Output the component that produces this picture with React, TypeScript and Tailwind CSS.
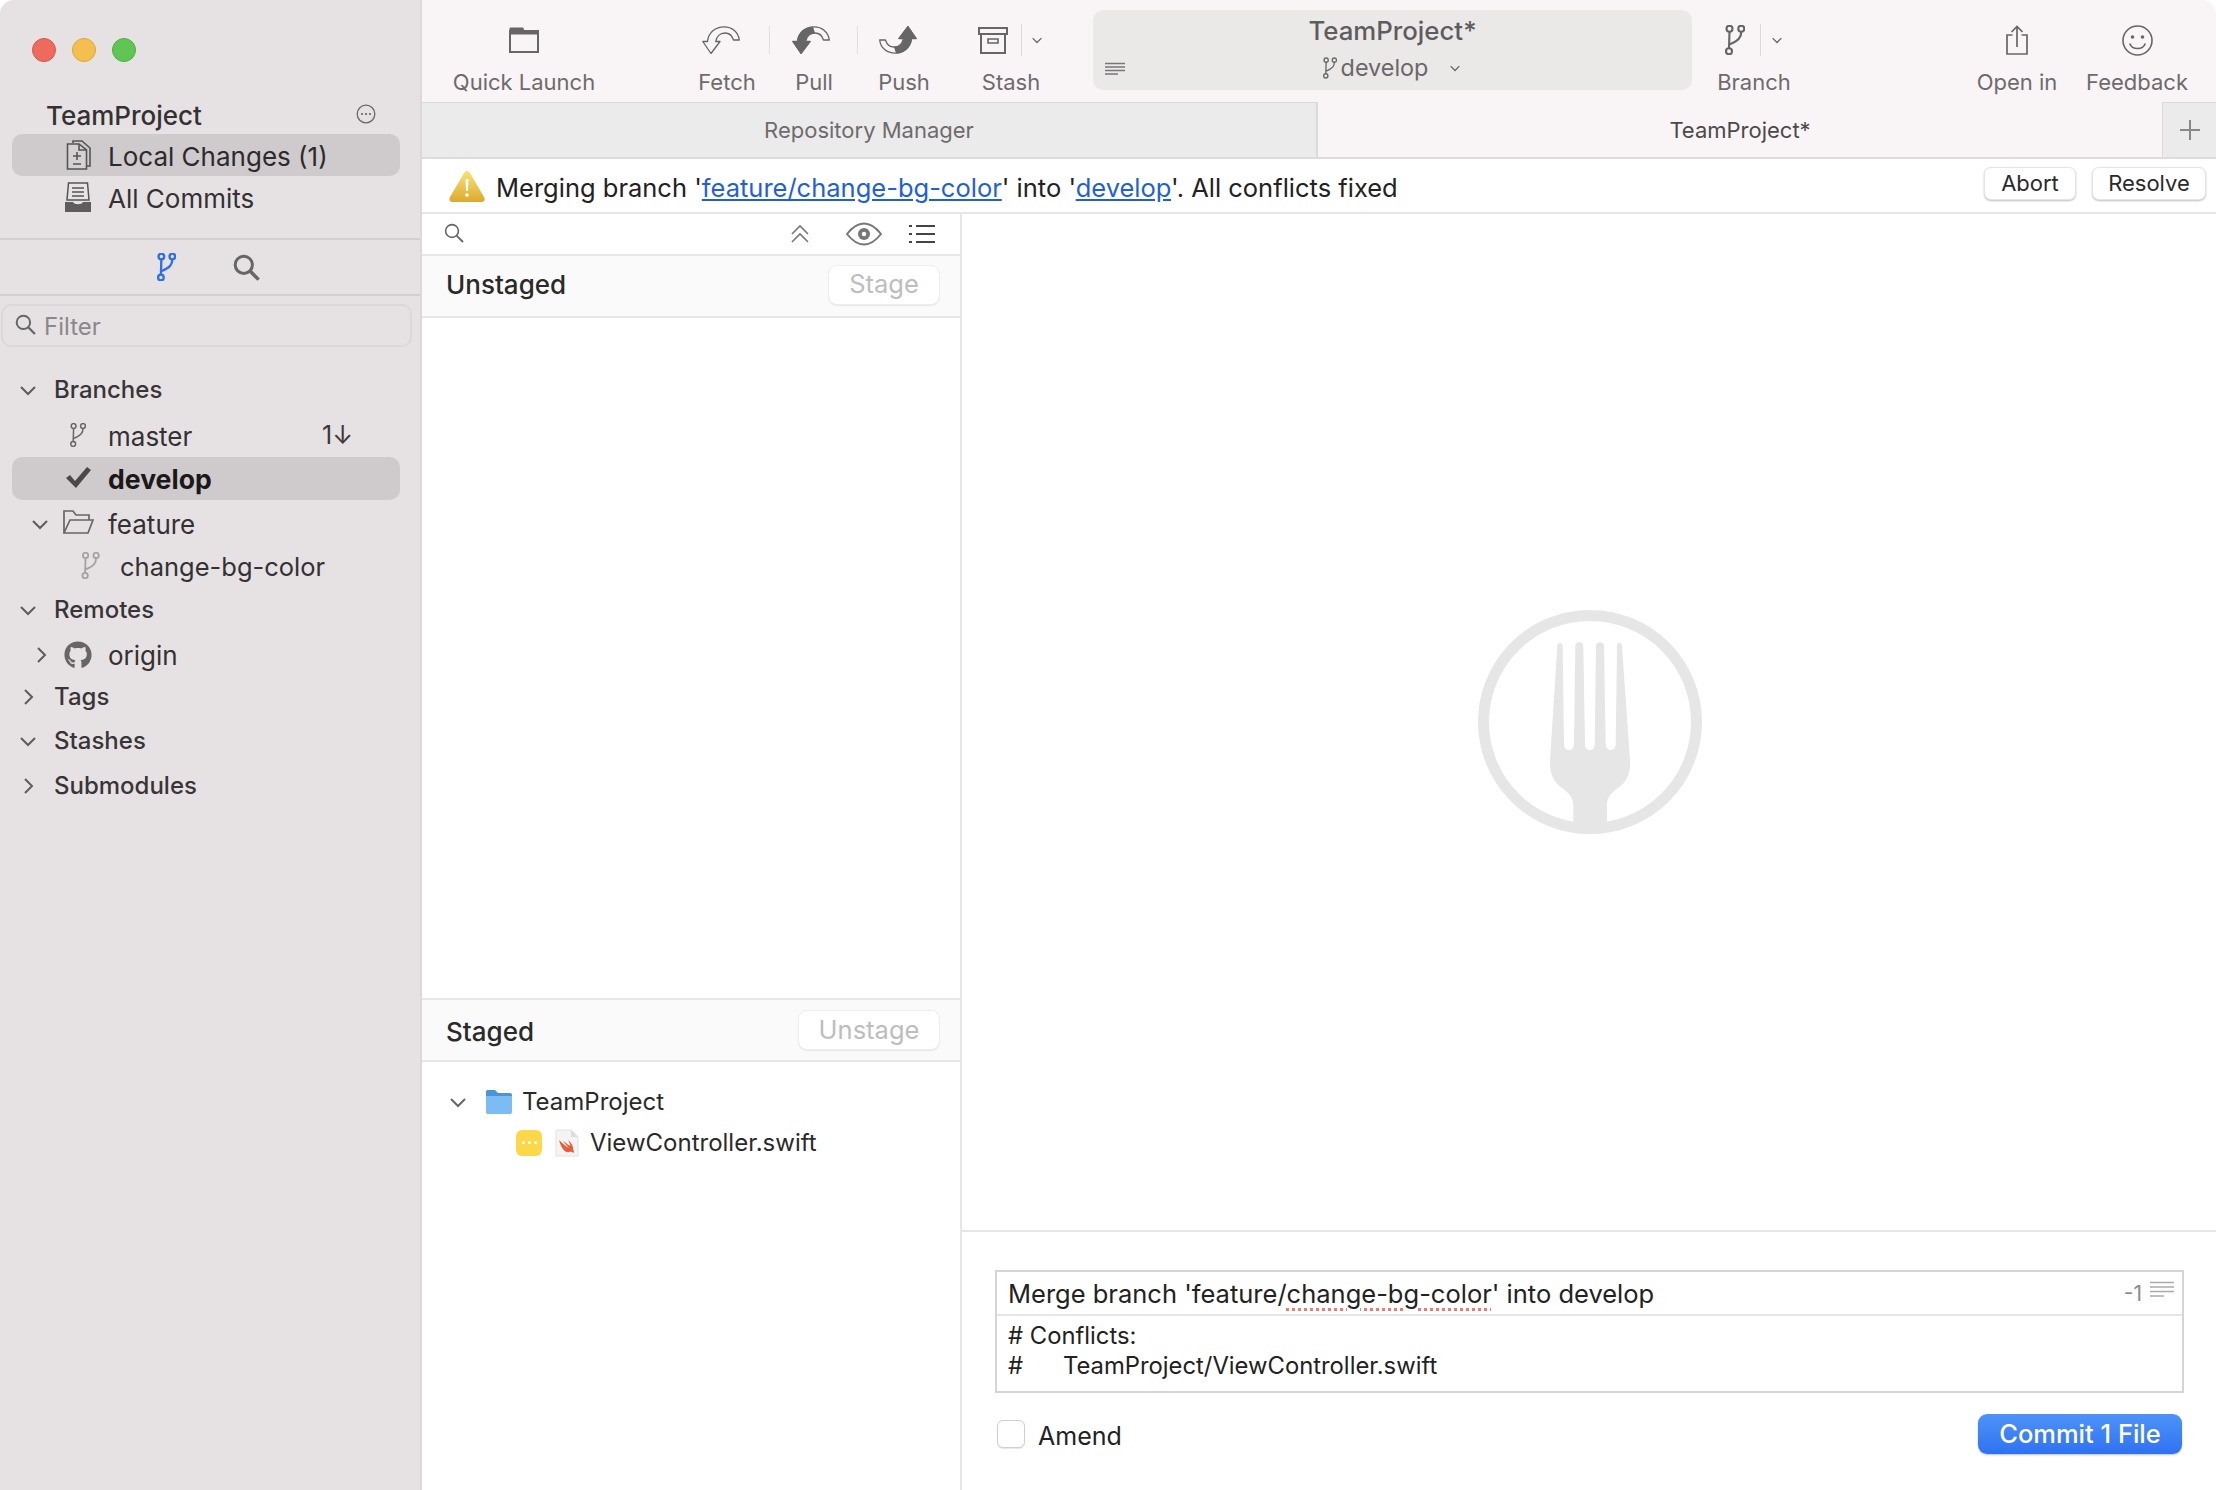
import React from "react";
import { FaGithub } from "react-icons/fa";

const FONT = "font-['Inter','Noto_Sans',sans-serif]";

function Branch({ s = "#555", w = 16, h = 24, sw = 1.6, className = "" }: { s?: string; w?: number; h?: number; sw?: number; className?: string }) {
  return (
    <svg width={w} height={h} viewBox="0 0 16 24" fill="none" stroke={s} strokeWidth={sw} className={className}>
      <circle cx="3.6" cy="3" r="2.4" />
      <circle cx="13" cy="3" r="2.4" />
      <circle cx="3.2" cy="21" r="2.4" />
      <path d="M3.6 5.4 L3.2 18.6 M13 5.4 C13 10 11 12.5 3.6 15.5" />
    </svg>
  );
}

function Search({ s = "#666", size = 18, sw = 1.8, className = "" }: { s?: string; size?: number; sw?: number; className?: string }) {
  return (
    <svg width={size} height={size} viewBox="0 0 20 20" fill="none" stroke={s} strokeWidth={sw} className={className}>
      <circle cx="8" cy="8" r="6.4" />
      <path d="M12.6 12.6 L19 19" strokeWidth={sw * 1.15} />
    </svg>
  );
}

function Chev({ dir = "down", s = "#5f5c5d", size = 16, sw = 2, className = "" }: { dir?: "down" | "right"; s?: string; size?: number; sw?: number; className?: string }) {
  return (
    <svg width={size} height={size} viewBox="0 0 16 16" fill="none" stroke={s} strokeWidth={sw} className={className}>
      {dir === "down" ? <path d="M1 5 L8 12 L15 5" /> : <path d="M5 1 L12 8 L5 15" />}
    </svg>
  );
}

function ArrowCurve({ mode }: { mode: "fetch" | "pull" | "push" }) {
  const outline =
    "M9 27.5 L0.8 15.5 H5.5 C6.5 6 14 0.8 22 0.8 C30 0.8 36.5 6 37.3 14 H31.5 C30 9 27 7 23 7 C18 7 14.5 10.5 13.7 15.5 H18 Z";
  const fill = "M9 28 L0 15 H5 C6 6 13 1 21 0.8 L23 7 C18 7 14.5 10.5 13.7 15 H19 Z";
  return (
    <svg width="38" height="28" viewBox="0 0 38 28" fill="none" stroke="#666" strokeWidth="1.3" strokeLinejoin="round">
      <g transform={mode === "push" ? "rotate(180 19 14)" : undefined}>
        <path d={outline} />
        {mode !== "fetch" && <path d={fill} fill="#666" stroke="none" />}
      </g>
    </svg>
  );
}

function ToolCol({ w, ml, label, children }: { w: string; ml: string; label: string; children: React.ReactNode }) {
  return (
    <div className={`${w} ${ml} h-[102px] shrink-0 flex flex-col items-center`}>
      <div className="mt-[22px] h-[36px] flex items-center justify-center">{children}</div>
      <div className="mt-[10px] h-[28px] leading-[28px] text-[22px] text-[#6e6b6c] whitespace-nowrap">{label}</div>
    </div>
  );
}

function ToolSep({ ml }: { ml: string }) {
  return <div className={`${ml} mt-[26px] h-[28px] w-[1px] bg-[#e2dfe0] shrink-0`} />;
}

function Section({ mt, chev, label }: { mt?: string; chev: "down" | "right"; label: string }) {
  return (
    <div className={`${mt ?? ""} h-[44px] pl-[20px] flex items-center`}>
      <div className="w-[16px] flex justify-center shrink-0">
        <Chev dir={chev} />
      </div>
      <div className="ml-[18px] text-[24px] font-medium text-[#383536] whitespace-nowrap">{label}</div>
    </div>
  );
}

function Sidebar() {
  return (
    <div className="w-[422px] shrink-0 h-full bg-[#e6e2e4] border-r-[2px] border-[#dcd9da] flex flex-col">
      <div className="h-[98px] pt-[38px] pl-[32px] flex gap-[16px]">
        <div className="w-[24px] h-[24px] rounded-full bg-[#ee6a5f] border border-[#d9574c]" />
        <div className="w-[24px] h-[24px] rounded-full bg-[#f5bf4f] border border-[#dba53a]" />
        <div className="w-[24px] h-[24px] rounded-full bg-[#61c554] border border-[#4fae43]" />
      </div>
      <div className="h-[36px] pl-[46px] pr-[44px] pb-[2px] flex items-center justify-between">
        <div className="text-[26px] font-medium text-[#343132]">TeamProject</div>
        <svg width="20" height="20" viewBox="0 0 20 20" fill="none" stroke="#666" strokeWidth="1.3" className="-mt-[2px]">
          <circle cx="10" cy="10" r="8.8" />
          <circle cx="6" cy="10" r="1.1" fill="#666" stroke="none" />
          <circle cx="10" cy="10" r="1.1" fill="#666" stroke="none" />
          <circle cx="14" cy="10" r="1.1" fill="#666" stroke="none" />
        </svg>
      </div>
      <div className="ml-[12px] mr-[20px] h-[42px] rounded-[10px] bg-[#cfcbcc] flex items-center">
        <div className="w-[42px] ml-[54px] shrink-0">
          <svg width="26" height="30" viewBox="0 0 26 30" fill="none" stroke="#555" strokeWidth="1.6">
            <path d="M7 3 V1 H16 L24 8 V26 H21" />
            <path d="M1.5 4 H13 L20.5 10 V29 H1.5 Z" fill="#d6d2d3" />
            <path d="M13 4 V10 H20.5" />
            <path d="M11 12 V20 M7 16 H15 M7 24 H15" />
          </svg>
        </div>
        <div className="pt-[2px] text-[26px] text-[#2d2a2b] whitespace-nowrap">Local Changes (1)</div>
      </div>
      <div className="ml-[12px] mr-[20px] h-[42px] flex items-center">
        <div className="w-[43px] ml-[53px] shrink-0">
          <svg width="26" height="30" viewBox="0 0 26 30" fill="none">
            <path d="M3.5 1 H22.5 L24 18 H2 Z" stroke="#555" strokeWidth="1.5" fill="#e8e4e6" />
            <path d="M7 6 H19 M7 10 H19 M7 14 H19" stroke="#555" strokeWidth="1.5" />
            <path d="M0 20 H8 C9 23 17 23 18 20 H26 V30 H0 Z" fill="#5f5c5d" />
          </svg>
        </div>
        <div className="pt-[2px] text-[26px] text-[#343132] whitespace-nowrap">All Commits</div>
      </div>
      <div className="mt-[20px] h-[2px] bg-[#d3d0d1]" />
      <div className="h-[54px] flex items-center">
        <Branch s="#2f6fe8" w={19} h={28} sw={2} className="ml-[157px]" />
        <Search s="#666" size={27} sw={2.2} className="ml-[57px]" />
      </div>
      <div className="h-[2px] bg-[#d3d0d1]" />
      <div className="mt-[8px] ml-[1px] w-[411px] h-[43px] shrink-0 rounded-[10px] border-[2px] border-[#dbd8d9] flex items-center pl-[12px]">
        <Search s="#666" size={21} sw={1.9} className="-mt-[3px]" />
        <div className="ml-[8px] pt-[2px] text-[24px] text-[#8b8889]">Filter</div>
      </div>
      <div className="mt-[21px]">
        <Section chev="down" label="Branches" />
        <div className="mt-[2px] ml-[12px] mr-[20px] h-[44px] flex items-center">
          <div className="w-[48px] shrink-0" />
          <div className="w-[36px] shrink-0 flex justify-center">
            <Branch s="#666" w={16} h={24} sw={1.5} className="-mt-[3px]" />
          </div>
          <div className="ml-[12px] text-[26px] text-[#343132] whitespace-nowrap">master</div>
          <div className="ml-auto mr-[47px] text-[25px] text-[#3c393a]">1↓</div>
        </div>
        <div className="-mt-[1px] ml-[12px] mr-[20px] h-[43px] flex items-center rounded-[10px] bg-[#cfcbcc]">
          <div className="w-[48px] shrink-0" />
          <div className="w-[36px] shrink-0 flex justify-center">
            <svg width="25" height="21" viewBox="0 0 25 21" fill="#4b4849" className="-mt-[2px]">
              <path d="M0 11 L4 8 L9 14 L21 0 L25 3 L10 21 Z" />
            </svg>
          </div>
          <div className="ml-[12px] pt-[2px] text-[26.6px] font-bold text-[#1b1819]">develop</div>
        </div>
        <div className="mt-[2px] ml-[12px] mr-[20px] h-[44px] flex items-center">
          <div className="w-[36px] pl-[20px] shrink-0">
            <Chev />
          </div>
          <div className="ml-[15px] w-[31px] shrink-0 -mt-[4px]">
            <svg width="31" height="24" viewBox="0 0 31 24" fill="none" stroke="#666" strokeWidth="1.7">
              <path d="M1 23 V1 H10 L13 5 H26 V10" />
              <path d="M1 23 L7 10 H30 L25 23 Z" />
            </svg>
          </div>
          <div className="ml-[14px] text-[26px] text-[#343132]">feature</div>
        </div>
        <div className="-mt-[1px] ml-[12px] mr-[20px] h-[44px] flex items-center">
          <Branch s="#a5a2a3" w={19} h={27} sw={1.6} className="ml-[69px] -mt-[3px]" />
          <div className="ml-[20px] text-[25.5px] text-[#343132] whitespace-nowrap">change-bg-color</div>
        </div>
        <Section mt="-mt-[1px]" chev="down" label="Remotes" />
        <div className="mt-[1px] ml-[12px] mr-[20px] h-[44px] flex items-center">
          <Chev dir="right" className="ml-[21px]" />
          <FaGithub size={28} color="#666" className="ml-[15px] -mt-[1px]" />
          <div className="ml-[16px] text-[26px] text-[#343132]">origin</div>
        </div>
        <Section mt="-mt-[2px]" chev="right" label="Tags" />
        <Section chev="down" label="Stashes" />
        <Section mt="mt-[1px]" chev="right" label="Submodules" />
      </div>
    </div>
  );
}

function TopBar() {
  return (
    <div className="h-[102px] shrink-0 bg-[#f9f5f6] flex">
      <ToolCol w="w-[160px]" ml="ml-[22px]" label="Quick Launch">
        <svg width="30" height="26" viewBox="0 0 30 26" fill="none" stroke="#666" strokeWidth="2">
          <path d="M1 4 H29 V25 H1 Z" />
          <path d="M1 1 H14 L15 5 H29 V7 H1 Z" fill="#666" strokeWidth="1" />
        </svg>
      </ToolCol>
      <ToolCol w="w-[80px]" ml="ml-[83px]" label="Fetch">
        <div className="mr-[12px]">
          <ArrowCurve mode="fetch" />
        </div>
      </ToolCol>
      <ToolSep ml="ml-[2px]" />
      <ToolCol w="w-[80px]" ml="ml-[4px]" label="Pull">
        <div className="mr-[6px]">
          <ArrowCurve mode="pull" />
        </div>
      </ToolCol>
      <ToolSep ml="ml-[3px]" />
      <ToolCol w="w-[80px]" ml="ml-[6px]" label="Push">
        <div className="mr-[12px]">
          <ArrowCurve mode="push" />
        </div>
      </ToolCol>
      <ToolCol w="w-[100px]" ml="ml-[17px]" label="Stash">
        <svg width="30" height="27" viewBox="0 0 30 27" fill="none" stroke="#666" strokeWidth="2" className="-ml-[2px]">
          <path d="M1 1 H29 V7 H1 Z" />
          <path d="M3 7 V26 H27 V7" />
          <path d="M10 12 H20 V16 H10 Z" strokeWidth="1.6" />
        </svg>
        <div className="ml-[13px] h-[32px] w-[1px] bg-[#dcd9da]" />
        <Chev size={10} sw={2} s="#666" className="ml-[10px]" />
      </ToolCol>
      <div className="ml-[32px] mt-[10px] w-[599px] h-[80px] rounded-[10px] bg-[#ebe9e8] relative shrink-0 flex flex-col items-center">
        <div className="mt-[5px] h-[32px] leading-[32px] text-[25.8px] font-medium text-[#5f5c5d]">TeamProject*</div>
        <div className="mt-[5px] h-[32px] flex items-center text-[23.4px] text-[#6a6768] -ml-[2px]">
          <Branch s="#666" w={14} h={22} sw={1.5} />
          <span className="ml-[4px]">develop</span>
          <Chev size={10} sw={2} s="#666" className="ml-[22px]" />
        </div>
        <svg width="22" height="14" viewBox="0 0 22 14" stroke="#777" strokeWidth="1.6" className="absolute left-[11px] top-[52px]">
          <path d="M1 1.5 H21 M1 5 H21 M1 8.5 H21 M1 12 H14" />
        </svg>
      </div>
      <ToolCol w="w-[80px]" ml="ml-[22px]" label="Branch">
        <Branch s="#666" w={20} h={30} sw={1.7} className="-ml-[2px]" />
        <div className="ml-[15px] h-[32px] w-[1px] bg-[#dcd9da]" />
        <Chev size={10} sw={2} s="#666" className="ml-[11px]" />
      </ToolCol>
      <ToolCol w="w-[100px]" ml="ml-[173px]" label="Open in">
        <svg width="24" height="30" viewBox="0 0 24 30" fill="none" stroke="#666" strokeWidth="1.7">
          <path d="M7.5 10 H2 V29 H22 V10 H16.5" />
          <path d="M12 22 V1.5 M6.5 7 L12 1.5 L17.5 7" />
        </svg>
      </ToolCol>
      <ToolCol w="w-[110px]" ml="ml-[15px]" label="Feedback">
        <svg width="31" height="31" viewBox="0 0 31 31" fill="none" stroke="#666" strokeWidth="1.6">
          <circle cx="15.5" cy="15.5" r="14.5" />
          <circle cx="10.5" cy="12" r="1.8" fill="#666" stroke="none" />
          <circle cx="20.5" cy="12" r="1.8" fill="#666" stroke="none" />
          <path d="M8 19 C10 25 21 25 23 19" strokeLinecap="round" />
        </svg>
      </ToolCol>
    </div>
  );
}

function Tabs() {
  return (
    <div className="h-[57px] shrink-0 flex border-b-[2px] border-[#dedbdc] text-[22px]">
      <div className="w-[896px] bg-[#ecebeb] flex items-center justify-center text-[#6e6b6c] border-t border-[#dcd9da] border-r-[2px]">
        Repository Manager
      </div>
      <div className="w-[844px] bg-[#f9f5f6] flex items-center justify-center text-[#4c494a] pt-[1px]">TeamProject*</div>
      <div className="flex-1 bg-[#ecebeb] flex items-center justify-center border-l-[1px] border-t border-[#dcd9da]">
        <svg width="20" height="20" viewBox="0 0 20 20" stroke="#8a8788" strokeWidth="2">
          <path d="M10 0 V20 M0 10 H20" />
        </svg>
      </div>
    </div>
  );
}

function SmallButton({ label, w, className = "" }: { label: string; w: string; className?: string }) {
  return (
    <div
      className={`${w} h-[33px] rounded-[7px] bg-white border border-[#e5e5e5] shadow-[0_1px_2px_rgba(0,0,0,0.25)] flex items-center justify-center text-[22px] text-[#2a2a2a] ${className}`}
    >
      {label}
    </div>
  );
}

function Banner() {
  return (
    <div className="h-[55px] shrink-0 bg-white border-b-[2px] border-[#e6e6e6] flex items-center">
      <svg width="38" height="34" viewBox="0 0 38 34" className="ml-[26px] shrink-0">
        <defs>
          <linearGradient id="warn" x1="0" y1="0" x2="0" y2="1">
            <stop offset="0" stopColor="#f9e27a" />
            <stop offset="1" stopColor="#dca92e" />
          </linearGradient>
        </defs>
        <path d="M19 2 C20 2 21 2.5 22 4 L36 28 C37.5 31 36 33 33 33 H5 C2 33 0.5 31 2 28 L16 4 C17 2.5 18 2 19 2 Z" fill="url(#warn)" />
        <path d="M17.5 10 H20.5 L20 22 H18 Z" fill="#fff" />
        <circle cx="19" cy="26" r="1.8" fill="#fff" />
      </svg>
      <div className="ml-[10px] pt-[5px] text-[25.5px] text-[#222] whitespace-nowrap">
        Merging branch '<span className="text-[#1f5fd8] underline">feature/change-bg-color</span>' into '
        <span className="text-[#1f5fd8] underline">develop</span>'. All conflicts fixed
      </div>
      <SmallButton label="Abort" w="w-[92px]" className="ml-auto -mt-[4px]" />
      <SmallButton label="Resolve" w="w-[114px]" className="ml-[16px] mr-[10px] -mt-[4px]" />
    </div>
  );
}

function PanelHeader({ title, btn, btnW, up }: { title: string; btn: string; btnW: string; up: boolean }) {
  return (
    <div className={`h-[64px] shrink-0 bg-[#fafafa] border-y-[2px] border-[#e8e8e8] flex items-center pl-[24px] pr-[20px] justify-between ${up ? "pb-[3px]" : ""}`}>
      <div className={`text-[26px] font-medium text-[#2a2a2a] ${up ? "" : "mt-[2px]"}`}>{title}</div>
      <div className={`${btnW} h-[40px] rounded-[9px] bg-white border border-[#eeeeee] shadow-[0_1px_1px_rgba(0,0,0,0.08)] flex items-center justify-center text-[25.5px] text-[#bdbdbd]`}>
        {btn}
      </div>
    </div>
  );
}

function LeftPanel() {
  return (
    <div className="w-[540px] shrink-0 h-full flex flex-col border-r-[2px] border-[#e6e6e6] bg-white">
      <div className="h-[40px] shrink-0 flex items-center">
        <Search s="#666" size={20} sw={1.6} className="ml-[22px] -mt-[2px]" />
        <svg width="20" height="20" viewBox="0 0 20 20" fill="none" stroke="#777" strokeWidth="1.6" className="ml-[326px]">
          <path d="M2 10 L10 2 L18 10 M2 18 L10 10 L18 18" />
        </svg>
        <svg width="36" height="24" viewBox="0 0 36 24" fill="none" stroke="#777" strokeWidth="2" className="ml-[36px]">
          <path d="M1 12 C8 3 13 1.5 18 1.5 C23 1.5 28 3 35 12 C28 21 23 22.5 18 22.5 C13 22.5 8 21 1 12 Z" />
          <circle cx="18" cy="12" r="6" fill="#777" stroke="none" />
          <circle cx="18" cy="12" r="2.2" fill="#fff" stroke="none" />
        </svg>
        <svg width="26" height="20" viewBox="0 0 26 20" stroke="#444" strokeWidth="2" className="ml-[27px]">
          <path d="M7 2 H26 M7 10 H26 M7 18 H26 M0 2 H3 M0 10 H3 M0 18 H3" />
        </svg>
      </div>
      <PanelHeader title="Unstaged" btn="Stage" btnW="w-[112px]" up />
      <div className="flex-1" />
      <PanelHeader title="Staged" btn="Unstage" btnW="w-[142px]" up={false} />
      <div className="h-[428px] shrink-0 pt-[19px]">
        <div className="h-[41px] flex items-center">
          <Chev size={16} s="#666" sw={2} className="ml-[28px]" />
          <svg width="28" height="26" viewBox="0 0 28 26" className="ml-[19px]">
            <path d="M1 24 V3 C1 1.5 2 1 3 1 H10 L13 4 H25 C26.5 4 27 5 27 6 V10 H1 Z" fill="#4a94d8" />
            <path d="M1 7 H27 V23 C27 24.5 26 25 25 25 H3 C2 25 1 24.5 1 23 Z" fill="#7cbcf2" />
          </svg>
          <div className="ml-[9px] text-[24px] text-[#2a2a2a]">TeamProject</div>
        </div>
        <div className="h-[41px] flex items-center">
          <div className="ml-[94px] w-[26px] h-[26px] rounded-[6px] bg-[#fbd84a] flex items-center justify-center gap-[3px]">
            <span className="w-[3px] h-[3px] bg-white rounded-full" />
            <span className="w-[3px] h-[3px] bg-white rounded-full" />
            <span className="w-[3px] h-[3px] bg-white rounded-full" />
          </div>
          <svg width="24" height="28" viewBox="0 0 24 28" className="ml-[13px]">
            <path d="M1 1 H16 L23 8 V27 H1 Z" fill="#f4f4f4" stroke="#e2e2e2" />
            <path d="M16 1 V8 H23 Z" fill="#ddd" />
            <path d="M4 11 C8 15 11 17.5 14 19 C11 16 9 13.5 8 11.5 C11 14.5 14 16.5 15.5 17 C15 14.5 14 12.5 13 11 C17 14 18.5 18 18 20.5 C19.3 22.5 19 23.5 18.5 24 C17 22.5 15.5 22.7 14 23 C10 24 6 19 4 11 Z" fill="#ea5a35" />
          </svg>
          <div className="ml-[11px] text-[24px] text-[#2a2a2a] whitespace-nowrap">ViewController.swift</div>
        </div>
      </div>
    </div>
  );
}

function RightPanel() {
  return (
    <div className="flex-1 h-full flex flex-col bg-white">
      <div className="flex-1 flex items-center justify-center">
        <svg width="224" height="224" viewBox="0 0 224 224" className="ml-[2px] -mt-[1px]">
          <circle cx="112" cy="112" r="106.5" fill="none" stroke="#e6e6e6" strokeWidth="11" />
          <path
            fill="#e6e6e6"
            d="M79.3 36 C79.3 32 84.7 32 84.7 36 L86 134 C86 142 96 142 96 134 L97.3 36 C97.3 31 105.3 31 105.3 36 L107 134 C107 142 116.7 142 116.7 134 L118 36 C118 31 126 31 126 36 L127.7 134 C127.7 142 137.7 142 137.7 134 L139 36 C139 32 144 32 144 36 L152 150 C153 165 148 172 140 178 C133 183 129 187 129 195 L129 217 H95.3 L95.3 195 C95.3 187 91 183 84 178 C76 172 71.5 165 72 150 Z"
          />
        </svg>
      </div>
      <div className="h-[260px] shrink-0 border-t-[2px] border-[#e6e6e6] pl-[33px] pt-[38px]">
        <div className="h-[123px] w-[1189px] border-[2px] border-[#d5d5d5] flex flex-col">
          <div className="h-[44px] shrink-0 border-b-[2px] border-[#e6e6e6] pl-[11px] pr-[8px] flex items-center text-[25.5px] text-[#222] relative">
            <span className="whitespace-pre pt-[2px]">Merge branch 'feature/</span>
            <span className="whitespace-pre pt-[2px] underline decoration-dotted decoration-[#ef7a70] decoration-[3px] underline-offset-[5px]">change-bg-color</span>
            <span className="whitespace-pre pt-[2px]">' into develop</span>
            <span className="ml-auto text-[21px] text-[#8a8a8a] pt-[2px]">-1</span>
            <svg width="24" height="18" viewBox="0 0 24 18" stroke="#aaa" strokeWidth="1.6" className="ml-[8px] -mt-[6px]">
              <path d="M0 1.5 H24 M0 6 H24 M0 10.5 H24 M0 15 H14" />
            </svg>
          </div>
          <div className="pl-[11px] pt-[5px] text-[23.8px] leading-[30px] text-[#222] whitespace-pre">
            <div># Conflicts:</div>
            <div className="flex">
              <span className="w-[55px]">#</span>
              <span>TeamProject/ViewController.swift</span>
            </div>
          </div>
        </div>
        <div className="mt-[21px] w-[1187px] h-[40px] flex items-center">
          <div className="w-[28px] h-[28px] ml-[2px] rounded-[6px] bg-white border-[1.5px] border-[#cfcfcf] shadow-[0_1px_1px_rgba(0,0,0,0.1)]" />
          <div className="ml-[13px] text-[25px] text-[#222] mt-[5px]">Amend</div>
          <div className="ml-auto w-[204px] h-[40px] rounded-[9px] bg-gradient-to-b from-[#4e93f9] to-[#2f71f1] shadow-[0_1px_2px_rgba(0,0,0,0.25)] flex items-center justify-center text-[25.5px] font-medium text-white">
            Commit 1 File
          </div>
        </div>
      </div>
    </div>
  );
}

export default function App() {
  return (
    <div className={`${FONT} w-[2216px] h-[1490px] overflow-hidden flex rounded-t-[14px] antialiased`}>
      <Sidebar />
      <div className="flex-1 h-full flex flex-col min-w-0">
        <TopBar />
        <Tabs />
        <Banner />
        <div className="flex-1 min-h-0 flex">
          <LeftPanel />
          <RightPanel />
        </div>
      </div>
    </div>
  );
}
